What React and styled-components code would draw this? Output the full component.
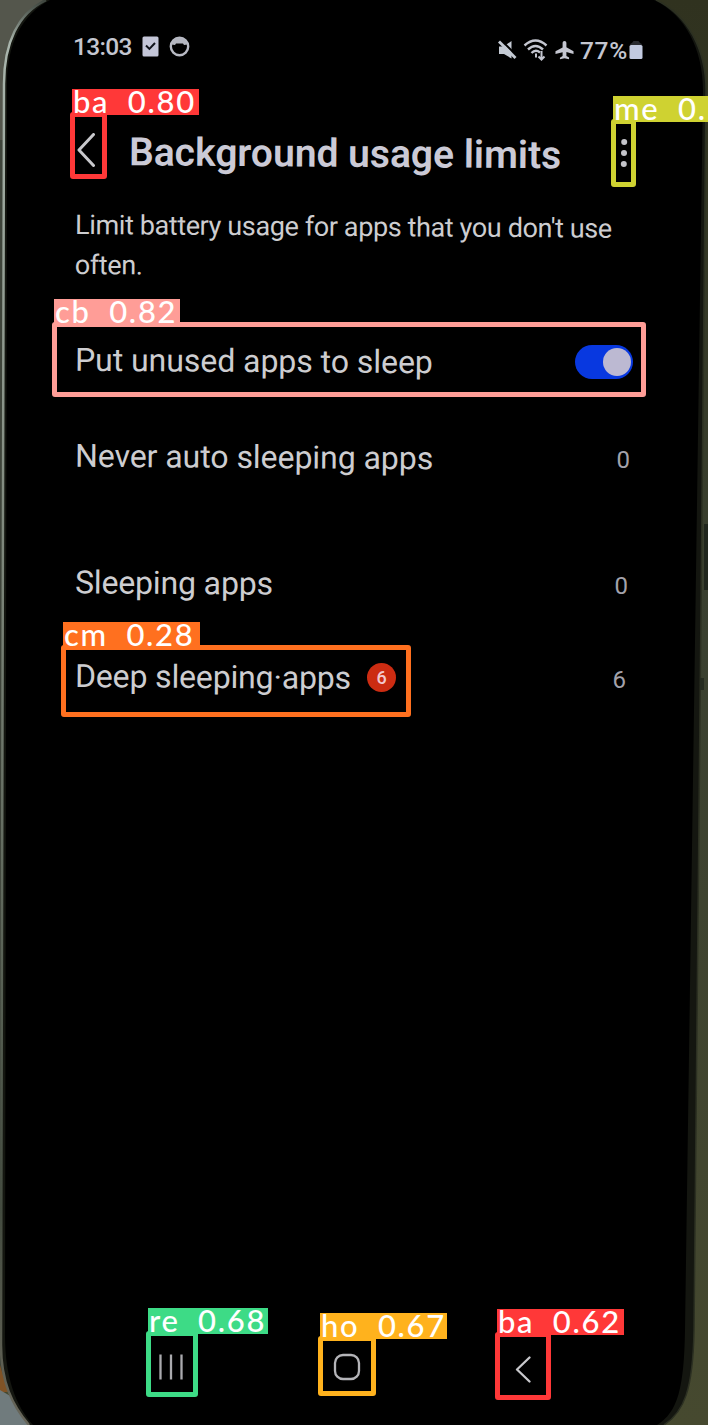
import React from "react";
import styled, { createGlobalStyle } from "styled-components";

const GlobalStyle = createGlobalStyle`
  * { box-sizing: border-box; }
  body { margin: 0; background: #3a3d2c; }
`;

const Stage = styled.main`
  position: relative;
  width: 708px;
  height: 1425px;
  overflow: hidden;
  font-family: Roboto, "Liberation Sans", sans-serif;
  color: #cdcdd0;
`;

const Backdrop = styled.svg`
  position: absolute;
  inset: 0;
`;

const Screen = styled.div`
  position: relative;
  display: flex;
  flex-direction: column;
  height: 100%;
  padding: 30px 62px 26px 73px;
`;

const StatusBar = styled.header`
  display: flex;
  justify-content: space-between;
  height: 44px;
  color: #c4c6d0;
`;

const StatusGroup = styled.div`
  display: flex;
  align-items: center;
  gap: ${(p) => p.$gap}px;
  height: 32px;
  margin-top: ${(p) => p.$top || 0}px;
  margin-right: ${(p) => p.$end || 0}px;
`;

const StatusText = styled.span`
  font-size: 24.5px;
  font-weight: ${(p) => p.$weight || 400};
  letter-spacing: ${(p) => p.$spacing || 0}px;
  margin-right: ${(p) => p.$end || 0}px;
`;

const TitleBar = styled.div`
  display: flex;
  align-items: center;
  height: 80px;
  margin-top: 39px;
  padding: 0 18px 0 4px;
`;

const BackButton = styled.span`
  display: flex;
  padding-bottom: 7px;
`;

const Title = styled.h1`
  flex: 1;
  margin: 2px 0 0 34px;
  font-size: 39px;
  line-height: 50px;
  font-weight: 600;
  white-space: nowrap;
  color: #cbcad6;
  transform: rotate(0.4deg);
`;

const Description = styled.p`
  margin: 12px 0 0 2px;
  font-size: 27px;
  line-height: 40px;
  letter-spacing: -0.38px;
  white-space: nowrap;
  transform: rotate(0.4deg);
  transform-origin: 0 50%;
`;

const Row = styled.div`
  display: flex;
  align-items: center;
  justify-content: space-between;
  height: 72px;
  margin-top: ${(p) => p.$top}px;
  padding: 0 ${(p) => p.$end}px 0 2px;
`;

const RowLabel = styled.span`
  font-size: 32px;
  line-height: 40px;
  letter-spacing: ${(p) => p.$spacing}px;
  white-space: nowrap;
  transform: rotate(0.4deg);
`;

const LabelGroup = styled.div`
  display: flex;
  align-items: center;
  gap: 16px;
`;

const Count = styled.span`
  margin-top: 5px;
  font-size: 24px;
  line-height: 30px;
  color: #a3a2ab;
`;

const Badge = styled.span`
  display: grid;
  place-items: center;
  width: 29px;
  height: 29px;
  border-radius: 50%;
  background: #cc2c12;
  color: #f2c9cf;
  font-size: 18px;
  font-weight: 500;
`;

const Toggle = styled.span`
  display: flex;
  justify-content: flex-end;
  align-items: center;
  width: 58px;
  height: 34px;
  margin-top: 2px;
  padding: 2px;
  border-radius: 17px;
  background: #0838e0;
`;

const Knob = styled.span`
  width: 28px;
  height: 28px;
  border-radius: 50%;
  background: #bcb9d2;
`;

const NavBar = styled.nav`
  display: flex;
  align-items: center;
  height: 60px;
  margin-top: auto;
  padding: 0 0 4px 85px;
`;

const NavItem = styled.span`
  display: flex;
  margin: ${(p) => p.$top || 0}px 0 0 ${(p) => p.$start || 0}px;
`;

const Detection = styled.div`
  position: absolute;
  left: ${(p) => p.$x}px;
  top: ${(p) => p.$y}px;
  width: ${(p) => p.$w}px;
  height: ${(p) => p.$h}px;
  border: 5px solid ${(p) => p.$color};
  border-radius: 3px;
`;

const Tag = styled.div`
  position: absolute;
  left: -3px;
  bottom: calc(100% + 2px);
  width: ${(p) => p.$w}px;
  height: 26px;
  padding-left: 1px;
  background: ${(p) => p.$color};
  color: #fff;
  font-family: Lato, sans-serif;
  font-size: 31px;
  line-height: 25px;
  font-weight: 500;
  letter-spacing: 1.7px;
  word-spacing: 9px;
  white-space: nowrap;
`;

const detections = [
  { name: "ba 0.80", x: 70, y: 112, w: 37, h: 67, tag: 127, color: "#ff3838" },
  { name: "me 0.", x: 611, y: 119, w: 25, h: 68, tag: 95, color: "#cfd231" },
  { name: "cb 0.82", x: 52, y: 322, w: 594, h: 75, tag: 126, color: "#ff9d97" },
  { name: "cm 0.28", x: 61, y: 645, w: 350, h: 72, tag: 137, color: "#ff701f" },
  { name: "re 0.68", x: 146, y: 1331, w: 52, h: 66, tag: 120, color: "#3ddb86" },
  { name: "ho 0.67", x: 318, y: 1336, w: 58, h: 60, tag: 127, color: "#ffb21d" },
  { name: "ba 0.62", x: 495, y: 1332, w: 56, h: 68, tag: 127, color: "#ff3838" },
];

function PhoneBody() {
  return (
    <Backdrop width="708" height="1425" viewBox="0 0 708 1425">
      <defs>
        <linearGradient id="wall" x1="0" y1="0" x2="0" y2="1">
          <stop offset="0" stopColor="#30321f" />
          <stop offset="0.45" stopColor="#3a4030" />
          <stop offset="1" stopColor="#46492f" />
        </linearGradient>
        <linearGradient id="rim" x1="0" y1="0" x2="0" y2="1">
          <stop offset="0" stopColor="#3d443d" />
          <stop offset="0.03" stopColor="#a9b5ac" />
          <stop offset="0.4" stopColor="#7c8579" />
          <stop offset="0.85" stopColor="#444c40" />
          <stop offset="1" stopColor="#68665a" />
        </linearGradient>
      </defs>
      <rect width="708" height="1425" fill="url(#wall)" />
      <path d="M0 0H60V150H0Z" fill="#54564c" />
      <path d="M0 140H10V1375H0Z" fill="#3e443a" />
      <path d="M0 1365L8 1392H0Z" fill="#805326" />
      <path d="M0 1390L60 1425H0Z" fill="#707b7d" />
      <path d="M46 0C18 13 4 43 4 84L1 1345C1 1382 12 1405 29 1425H664C684 1412 693 1390 694 1330L706 90C706 50 688 15 656 0Z" fill="#141610" />
      <path d="M46 0C18 13 4 43 4 84L1 1345C1 1382 12 1405 29 1425" fill="none" stroke="url(#rim)" strokeWidth="2.5" />
      <path d="M656 0C688 15 706 50 706 90L694 1330C693 1390 684 1412 664 1425" fill="none" stroke="#2c3022" strokeWidth="1.5" />
      <path d="M50 0C22 14 7 44 7 84L5 1335C5 1378 16 1406 33 1425H657C678 1412 684 1388 685 1330L703 90C703 50 686 15 654 0Z" fill="#000" />
      <path d="M704 524H708V590H704Z" fill="#20261d" />
      <path d="M700 678h4v12h-4Z" fill="#252b20" />
    </Backdrop>
  );
}

const ChecklistIcon = () => (
  <svg width="17" height="21" viewBox="0 0 17 21">
    <rect x="0.5" y="0.5" width="16" height="20" rx="1.5" fill="#c4c6d8" />
    <path d="M4 9.5l3.4 3.4L13 7" fill="none" stroke="#10131a" strokeWidth="2" />
  </svg>
);

const FaceIcon = () => (
  <svg width="21" height="21" viewBox="0 0 21 21">
    <circle cx="10.5" cy="10.5" r="8.7" fill="none" stroke="#b8bac4" strokeWidth="2.4" />
    <path d="M2.5 8.5C4 3 8 2 10.5 2S17 3 18.500 8.500L15 9L14 7.500H7L6 9Z" fill="#b4b6c0" />
  </svg>
);

const MuteIcon = () => (
  <svg width="19" height="20" viewBox="0 0 19 20">
    <path d="M1 6.500h4.500L13.500 1v17.500L6 14H1Z" fill="#c4cad4" />
    <path d="M3 0l16 16" stroke="#000" strokeWidth="2" />
    <path d="M1 1.500l16.500 16.500" stroke="#c4cad4" strokeWidth="2.800" />
  </svg>
);

const WifiIcon = () => (
  <svg width="26" height="22" viewBox="0 0 26 22">
    <g fill="none" stroke="#c4c6d0" strokeWidth="2.4">
      <path d="M1.500 6.500Q12.500-3.500 23.500 6.500" />
      <path d="M5 10.500Q12.500 3.500 20 10.500" />
      <path d="M8.500 14Q12.500 10 17 13.500" />
      <path d="M13 14.500v4M18.500 12v8M15.500 17.500l3 3l3-3" strokeWidth="2" />
    </g>
  </svg>
);

const PlaneIcon = () => (
  <svg width="19" height="20" viewBox="0 0 20 20">
    <path d="M10 .5c1.200 0 2 1 2 2.200v4.500l7.500 4v3l-7.500-2v4l2.800 1.800v1.700L10 18.800l-4.800 1v-1.700l2.800-1.800v-4l-7.500 2v-3l7.500-4V2.700C8 1.500 8.800 .5 10 .5Z" fill="#c4c6d0" />
  </svg>
);

const BatteryIcon = () => (
  <svg width="14" height="20" viewBox="0 0 14 20">
    <path d="M1 5Q1 3.500 3 3L4.500 1h5L11 3q2 .5 2 2Z" fill="#292b30" />
    <rect x="0.500" y="5" width="13" height="14" rx="1.500" fill="#c2cae0" />
  </svg>
);

const BackIcon = ({ w, h, stroke }) => (
  <svg width={w} height={h} viewBox={`0 0 ${w} ${h}`}>
    <path d={`M${w - 1.5} 1.500L2 ${h / 2}L${w - 1.5} ${h - 1.5}`} fill="none" stroke="#c8c8cc" strokeWidth={stroke} strokeLinecap="round" strokeLinejoin="round" />
  </svg>
);

const MoreIcon = () => (
  <svg width="8" height="30" viewBox="0 0 8 30">
    <g fill="#c4c4ca">
      <circle cx="4.200" cy="4" r="3" />
      <circle cx="4" cy="15" r="3" />
      <circle cx="3.800" cy="26" r="3" />
    </g>
  </svg>
);

const RecentsIcon = () => (
  <svg width="26" height="26" viewBox="0 0 26 26">
    <path d="M2.500 .5V25.500M13 .5V25.500M23.500 .5V25.500" stroke="#aaaaae" strokeWidth="2.300" />
  </svg>
);

const HomeIcon = () => (
  <svg width="28" height="28" viewBox="0 0 28 28">
    <rect x="2" y="2" width="24" height="24" rx="8" fill="none" stroke="#b4b4b8" strokeWidth="2.300" />
  </svg>
);

export default function App() {
  return (
    <Stage>
      <GlobalStyle />
      <PhoneBody />
      <Screen>
        <StatusBar>
          <StatusGroup $gap={10}>
            <StatusText $weight={500} $spacing={-0.7}>13:03</StatusText>
            <ChecklistIcon />
            <FaceIcon />
          </StatusGroup>
          <StatusGroup $gap={6} $top={4} $end={3}>
            <MuteIcon />
            <WifiIcon />
            <PlaneIcon />
            <StatusText $weight={500} $spacing={0.7} $end={-5}>77%</StatusText>
            <BatteryIcon />
          </StatusGroup>
        </StatusBar>
        <TitleBar>
          <BackButton><BackIcon w={18} h={34} stroke={3} /></BackButton>
          <Title>Background usage limits</Title>
          <MoreIcon />
        </TitleBar>
        <Description>
          Limit battery usage for apps that you don't use
          <br />
          often.
        </Description>
        <Row $top={40} $end={13}>
          <RowLabel $spacing={-0.05}>Put unused apps to sleep</RowLabel>
          <Toggle><Knob /></Toggle>
        </Row>
        <Row $top={24} $end={16}>
          <RowLabel $spacing={-0.05}>Never auto sleeping apps</RowLabel>
          <Count>0</Count>
        </Row>
        <Row $top={54} $end={18}>
          <RowLabel $spacing={-0.15}>Sleeping apps</RowLabel>
          <Count>0</Count>
        </Row>
        <Row $top={22} $end={20}>
          <LabelGroup>
            <RowLabel $spacing={-0.15}>Deep sleeping·apps</RowLabel>
            <Badge>6</Badge>
          </LabelGroup>
          <Count>6</Count>
        </Row>
        <NavBar>
          <NavItem><RecentsIcon /></NavItem>
          <NavItem $start={149}><HomeIcon /></NavItem>
          <NavItem $start={154} $top={5}><BackIcon w={16} h={27} stroke={2.3} /></NavItem>
        </NavBar>
      </Screen>
      {detections.map((d) => (
        <Detection key={d.x} $x={d.x} $y={d.y} $w={d.w} $h={d.h} $color={d.color}>
          <Tag $w={d.tag} $color={d.color}>{d.name}</Tag>
        </Detection>
      ))}
    </Stage>
  );
}
